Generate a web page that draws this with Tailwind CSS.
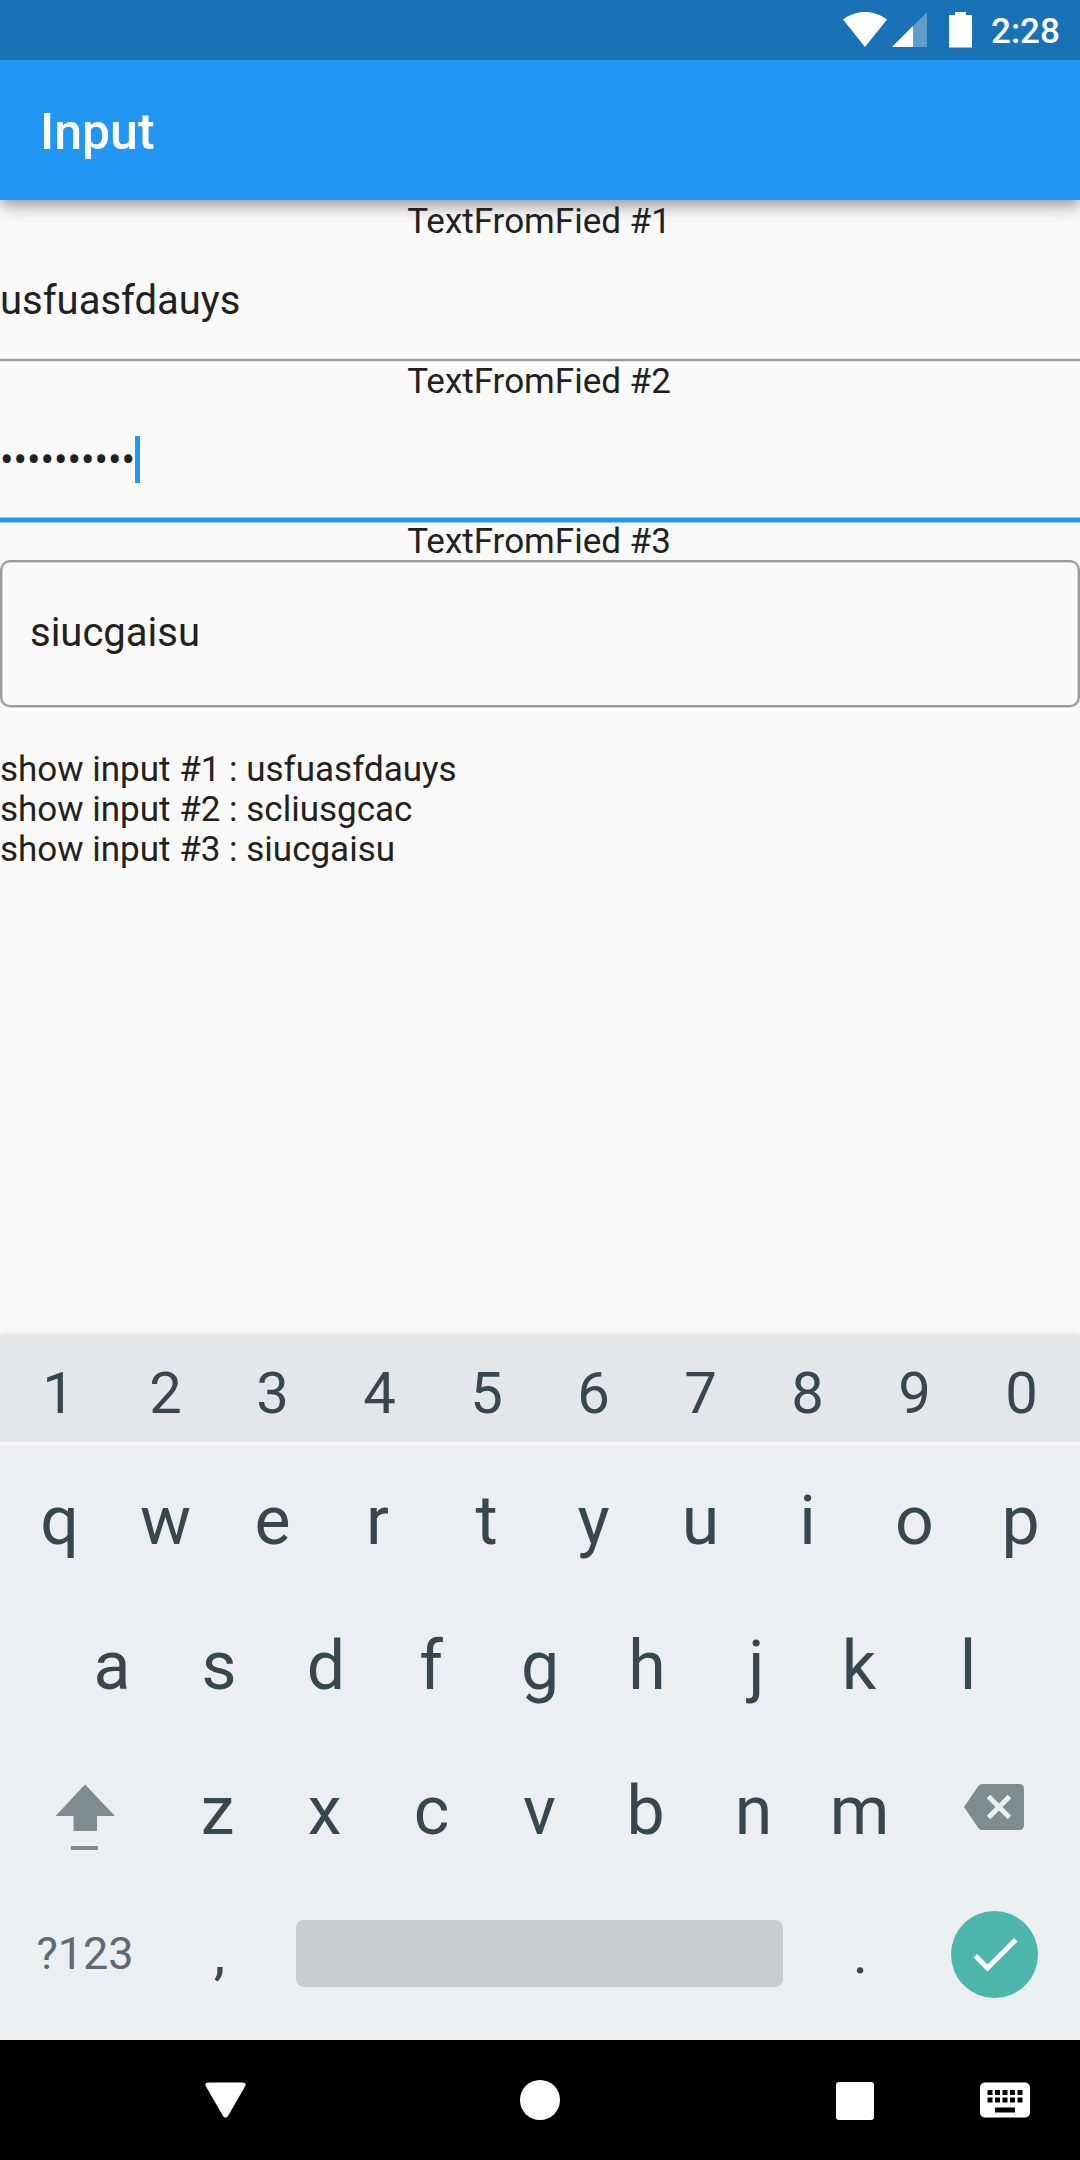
<!DOCTYPE html>
<html lang="en">
<head>
<meta charset="utf-8">
<title>Input</title>
<script src="https://cdn.jsdelivr.net/npm/@tailwindcss/browser@4"></script>
</head>
<body class="w-[1080px] h-[2160px] overflow-hidden bg-[#fafafa] font-['Roboto',sans-serif] text-[#212121] flex flex-col">
  <!-- Status bar -->
  <div class="relative z-10 h-[60px] shrink-0 bg-[#1971b6] text-white flex items-center justify-end pr-[19px]">
    <svg class="w-[137px] h-[60px] shrink-0" viewBox="840 0 137 60" fill="#fff">
      <path d="M865 47 843 19.5C856 9.500 874 9.500 887 19.500Z"/>
      <path d="M892 47 927 12V47Z" opacity=".3"/>
      <path d="M892 47 913 26V47Z"/>
      <path d="M949 15h6v-3h11v3h6v32.500h-23Z"/>
    </svg>
    <span class="w-[70px] ml-[14px] text-[35px] leading-none font-medium pt-[2px] whitespace-nowrap">2:28</span>
  </div>
  <!-- App bar -->
  <header class="relative h-[140px] shrink-0 bg-[#2196f3] flex items-center pl-[40px] pt-[4px] shadow-[0_5px_10px_-2.5px_rgba(0,0,0,0.2),0_10px_12.5px_0_rgba(0,0,0,0.14),0_2.5px_25px_0_rgba(0,0,0,0.12)]">
    <h1 class="text-[50px] font-medium leading-none text-white">Input</h1>
  </header>

  <main class="flex-1 flex flex-col text-[35px] leading-[40px]">
    <div class="relative text-center h-[40px] shrink-0 pt-[2px] pr-[2px]">TextFromFied #1</div>
    <div class="h-[119px] shrink-0 flex items-center pt-[2px] text-[40px]">usfuasfdauys</div>
    <div class="h-[2px] shrink-0 bg-[#9b9b9b] shadow-[0_1px_#e0e0e0,0_-1px_#e0e0e0]"></div>
    <div class="text-center h-[40px] shrink-0 -mt-px pt-[2px] pr-[2px]">TextFromFied #2</div>
    <div class="h-[118px] shrink-0 flex items-center text-[40px]">
      <span class="pt-[3px]">••••••••••</span><span class="w-[5px] h-[47px] bg-[#2196f3]"></span>
    </div>
    <div class="h-[4px] shrink-0 bg-[#2196f3] shadow-[0_1px_#90cbf8,0_-1px_#90cbf8]"></div>
    <div class="text-center h-[40px] shrink-0 -mt-[2px] pt-[2px] pr-[2px]">TextFromFied #3</div>
    <div class="h-[147px] shrink-0 border-2 border-[#9b9b9b] rounded-[10px] shadow-[inset_1px_1px_#d4d4d4,inset_-1px_0_#d4d4d4,0_1px_#cfcfcf] flex items-center pl-[28px] pb-[1px] text-[40px]">siucgaisu</div>
    <div class="mt-[43px] flex flex-col">
      <p>show input #1 : usfuasfdauys</p>
      <p>show input #2 : scliusgcac</p>
      <p>show input #3 : siucgaisu</p>
    </div>
  </main>

  <!-- Keyboard -->
  <section class="h-[705px] shrink-0 bg-[#ebeff2] text-[#37474f] shadow-[0_-1px_5px_rgba(0,0,0,0.12)] flex flex-col text-[68px] leading-none text-center">
    <div class="h-[110px] shrink-0 bg-[#e3e7ea] border-b-[3px] border-[#f5f7f9] px-[5px] pt-[9px] grid grid-cols-10 items-center text-[58px]">
      <span>1</span><span>2</span><span>3</span><span>4</span><span>5</span><span>6</span><span>7</span><span>8</span><span>9</span><span>0</span>
    </div>
    <div class="h-[145px] mt-[3px] shrink-0 px-[5px] grid grid-cols-10 items-center">
      <span class="pl-[2px]">q</span><span>w</span><span>e</span><span class="pr-[4px]">r</span><span>t</span><span>y</span><span>u</span><span>i</span><span>o</span><span class="pr-[2px]">p</span>
    </div>
    <div class="h-[145px] shrink-0 px-[58.5px] grid grid-cols-9 items-center">
      <span>a</span><span>s</span><span>d</span><span class="pr-[4px]">f</span><span>g</span><span>h</span><span class="pl-[5px]">j</span><span class="pr-[4px]">k</span><span>l</span>
    </div>
    <div class="h-[145px] shrink-0 px-[5px] grid grid-cols-[160px_repeat(7,107px)_160px] items-center">
      <svg class="w-[160px] h-[145px]" viewBox="5 1738 160 145" fill="#808b8f">
        <path d="M85 1784.500 115 1816H97v15H73.500v-15H55.500Z"/>
        <path d="M71 1846h27v4H71Z"/>
      </svg>
      <span class="pr-[2px]">z</span><span class="pr-[2px]">x</span><span class="pr-[2px]">c</span><span>v</span><span class="pr-[2px]">b</span><span>n</span><span class="pr-[2px]">m</span>
      <svg class="w-[160px] h-[145px]" viewBox="914 1738 160 145">
        <path fill="#808b8f" d="M982 1784h37q5 0 5 5v36q0 5-5 5H982q-2.500 0-4-2.500L964 1807l14-20.500q1.500-2.500 4-2.500Z"/>
        <path stroke="#ebeff2" stroke-width="5" fill="none" d="m988.500 1796.500 21 21m0-21-21 21"/>
      </svg>
    </div>
    <div class="h-[142px] shrink-0 px-[5px] grid grid-cols-[160px_107px_535px_107px_160px] items-center text-[58px]">
      <span class="text-[45px] text-[#5d6b71] pb-[2px]">?123</span>
      <span class="pl-[2px] pb-[3px]">,</span>
      <span class="h-[67px] mx-[24px] -mt-px bg-[#c9cdd0] rounded-[8px]"></span>
      <span class="pb-[3px]">.</span>
      <span class="w-[87px] h-[87px] ml-[37px] rounded-full bg-[#4db6ac] flex items-center justify-center">
        <svg class="w-[60px] h-[60px]" viewBox="0 0 24 24" fill="#fff"><path d="M9 16.170 4.830 12l-1.420 1.410L9 19 21 7l-1.410-1.410z"/></svg>
      </span>
    </div>
  </section>

  <!-- Navigation bar -->
  <nav class="h-[120px] shrink-0 bg-black flex items-center pl-[205px]">
    <svg class="w-[41px] h-[36px]" viewBox="0 0 41 36" fill="#fff"><path d="M4 .5H37Q42 .5 40 4.500L23 34Q20.500 37.500 18 34L1 4.500Q-1 .5 4 .5Z"/></svg>
    <span class="size-[40px] ml-[273.5px] -mt-px rounded-full bg-white"></span>
    <span class="size-[38px] ml-[276.5px] mt-px rounded-[3px] bg-white"></span>
    <svg class="size-[60px] ml-[101px]" viewBox="0 0 24 24" fill="#fff"><path d="M20 5H4c-1.100 0-1.990.9-1.990 2L2 17c0 1.100.9 2 2 2h16c1.100 0 2-.9 2-2V7c0-1.100-.9-2-2-2zm-9 3h2v2h-2V8zm0 3h2v2h-2v-2zM8 8h2v2H8V8zm0 3h2v2H8v-2zm-1 2H5v-2h2v2zm0-3H5V8h2v2zm9 7H8v-2h8v2zm0-4h-2v-2h2v2zm0-3h-2V8h2v2zm3 3h-2v-2h2v2zm0-3h-2V8h2v2z"/></svg>
  </nav>
</body>
</html>
